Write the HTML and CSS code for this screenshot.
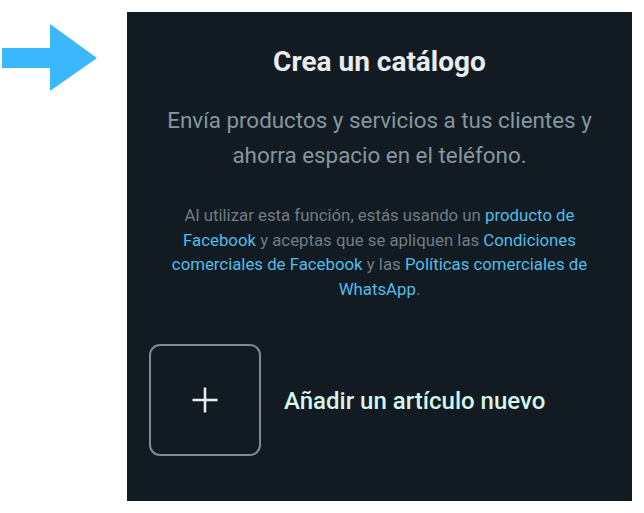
FILE: index.html
```html
<!DOCTYPE html>
<html>
<head>
  <title>Crea un catálogo</title>
  <link rel="stylesheet" href="styles.css">
</head>
<body>

<div class="page">
  <svg class="pointer" width="98" height="70" viewBox="0 0 98 70">
    <polygon points="2,24 50,24 50,0 97,34 50,67 50,44 2,44" fill="#3bb8fb"/>
  </svg>

  <div class="panel">
    <h2 class="title">Crea un catálogo</h2>
    <p class="lead">Envía productos y servicios a tus clientes y ahorra espacio en el teléfono.</p>
    <p class="terms">
      Al utilizar esta función, estás usando un <a href="#">producto de Facebook</a>
      y aceptas que se apliquen las <a href="#">Condiciones comerciales de Facebook</a>
      y las <a href="#">Políticas comerciales de WhatsApp</a>.
    </p>

    <div class="add-item">
      <div class="add-box">
        <svg width="28" height="28" viewBox="0 0 28 28">
          <path d="M14 1.5v25M1.5 14h25" stroke="#e9edef" stroke-width="2.6"/>
        </svg>
      </div>
      <span class="add-label">Añadir un artículo nuevo</span>
    </div>
  </div>
</div>

</body>
</html>
```

FILE: styles.css
```css
body {
  margin: 0;
  background: #fff;
  font-family: Roboto, "Noto Sans", sans-serif;
}
.page {
  display: flex;
  align-items: flex-start;
  padding-top: 12px;
}
.pointer {
  margin-top: 12px;
  margin-right: 29px;
  flex-shrink: 0;
}
.panel {
  width: 505px;
  height: 489px;
  background: #111b21;
  box-sizing: border-box;
  padding-top: 34px;
  text-align: center;
}
.title {
  margin: 0;
  font-size: 28px;
  font-weight: 700;
  line-height: 32px;
  color: #e9edef;
}
.lead {
  margin: 25px auto 0;
  width: 450px;
  font-size: 22.4px;
  line-height: 35px;
  color: #8696a0;
}
.terms {
  margin: 30px auto 0;
  width: 440px;
  font-size: 16.8px;
  line-height: 24.7px;
  color: #6f7d86;
}
.terms a {
  color: #53bdeb;
  text-decoration: none;
}
.add-item {
  display: flex;
  align-items: center;
  gap: 23px;
  margin: 42px 0 0 22px;
}
.add-box {
  width: 112px;
  height: 112px;
  box-sizing: border-box;
  border: 2px solid #7d8b93;
  border-radius: 11px;
  display: flex;
  align-items: center;
  justify-content: center;
}
.add-label {
  font-size: 24px;
  font-weight: 500;
  line-height: 32px;
  padding-top: 3px;
  color: #d7f5e8;
}
```
